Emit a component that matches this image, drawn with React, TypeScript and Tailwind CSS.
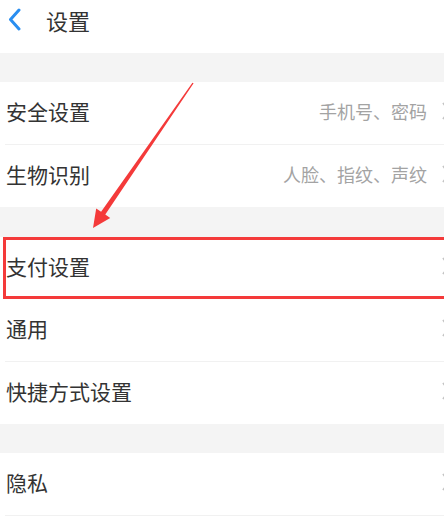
import React from "react";

const font = { fontFamily: '"Noto Sans CJK SC", "Noto Sans", sans-serif' };

function Chevron() {
  return (
    <svg width="8" height="18" viewBox="0 0 8 18" className="shrink-0 -mr-[6px]">
      <path d="M1 1 L7 9 L1 17" fill="none" stroke="#c4c4c4" strokeWidth="1.8" />
    </svg>
  );
}

function Row({ label, detail, sep }: { label: string; detail?: string; sep?: boolean }) {
  return (
    <div className="bg-white">
      <div className="h-[62px] flex items-center pl-[6px] pr-0 pb-[4px]">
        <span className="text-[21px] text-[#333333] leading-none">{label}</span>
        <div className="flex-1" />
        {detail && <span className="text-[18px] text-[#a3a3a3] leading-none mr-[15px]">{detail}</span>}
        <Chevron />
      </div>
      {sep && <div className="ml-[5px] h-px bg-[#f1f1f1]" />}
    </div>
  );
}

export default function App() {
  return (
    <div className="relative w-[444px] h-[524px] overflow-hidden bg-white" style={font}>
      <div className="h-[53px] flex items-center pl-[8px] pb-[14px]">
        <svg width="13" height="23" viewBox="0 0 13 23">
          <path d="M11 2 L2.5 11.5 L11 21" fill="none" stroke="#2a8ef0" strokeWidth="3" strokeLinecap="round" strokeLinejoin="round" />
        </svg>
        <span className="ml-[25px] text-[22px] text-[#333333] leading-none">设置</span>
      </div>
      <div className="h-[29px] bg-[#f4f4f4]" />
      <Row label="安全设置" detail="手机号、密码" sep />
      <Row label="生物识别" detail="人脸、指纹、声纹" />
      <div className="h-[30px] bg-[#f4f4f4]" />
      <Row label="支付设置" />
      <Row label="通用" sep />
      <Row label="快捷方式设置" />
      <div className="h-[29px] bg-[#f4f4f4]" />
      <Row label="隐私" sep />

      <div className="absolute left-[3px] top-[237px] w-[460px] h-[62px] border-[3px] border-[#f43a3a] pointer-events-none" />
      <svg className="absolute inset-0 pointer-events-none" width="444" height="524">
        <polygon
          points="193.6,83.3 105.3,214.6 110.2,218 93,228 96.2,208.4 101.1,211.8 192.4,82.7"
          fill="#f43a3a"
        />
      </svg>
    </div>
  );
}
